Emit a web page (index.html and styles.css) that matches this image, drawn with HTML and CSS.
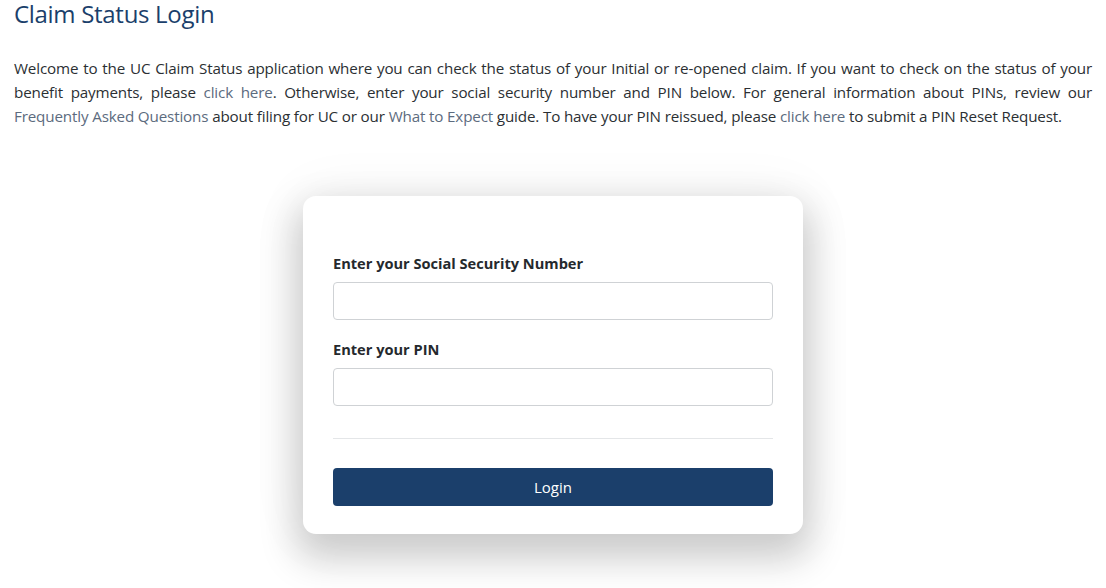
FILE: index.html
```html
<!DOCTYPE html>
<html lang="en">
<head>
<meta charset="utf-8">
<title>Claim Status Login</title>
<link rel="stylesheet" href="styles.css">
</head>
<body>
<main class="page">
  <h1 class="title">Claim Status Login</h1>
  <p class="intro">Welcome to the UC Claim Status application where you can check the status of your Initial or re-opened claim. If you want to check on the status of your benefit payments, please <a href="#">click here</a>. Otherwise, enter your social security number and PIN below. For general information about PINs, review our <a href="#">Frequently Asked Questions</a> about filing for UC or our <a href="#">What to Expect</a> guide. To have your PIN reissued, please <a href="#">click here</a> to submit a PIN Reset Request.</p>
  <div class="card-wrap">
    <form class="card">
      <label class="label" for="ssn">Enter your Social Security Number</label>
      <input class="field" id="ssn" type="text">
      <label class="label" for="pin">Enter your PIN</label>
      <input class="field" id="pin" type="password">
      <hr class="divider">
      <button class="btn" type="button">Login</button>
    </form>
  </div>
</main>
</body>
</html>
```
FILE: styles.css
```css
html, body {
  margin: 0;
  padding: 0;
  background: #fff;
}
body {
  font-family: "Open Sans", "Noto Sans", sans-serif;
  color: #2b2f33;
}
.page {
  padding: 1px 14px 80px;
}
.title {
  margin: 0;
  font-size: 24px;
  line-height: 26px;
  font-weight: 400;
  color: #1b3f6b;
  letter-spacing: -0.3px;
}
.intro {
  margin: 30px 0 0;
  font-size: 15.2px;
  line-height: 23.8px;
  text-align: justify;
  letter-spacing: -0.15px;
}
.intro a {
  color: #5c6b7e;
  text-decoration: none;
}
.card-wrap {
  display: flex;
  justify-content: center;
  padding-top: 68px;
}
.card {
  width: 440px;
  padding: 58px 30px 28px;
  background: #fff;
  border-radius: 13px;
  box-shadow: 0 18px 36px 8px rgba(0,0,0,0.18), 0 0 60px rgba(0,0,0,0.06);
  display: flex;
  flex-direction: column;
}
.label {
  font-size: 14.6px;
  font-weight: 700;
  line-height: 18px;
  color: #25292d;
  margin-bottom: 10px;
}
.field {
  height: 38px;
  box-sizing: border-box;
  border: 1px solid #cfd2d5;
  border-radius: 4px;
  margin: 0 0 20px;
  font: inherit;
}
.divider {
  border: 0;
  border-top: 1px solid #e4e6e8;
  margin: 12px 0 29px;
  width: 100%;
}
.btn {
  height: 38px;
  background: #1b3f6b;
  color: #fff;
  border: 0;
  border-radius: 4px;
  font-family: inherit;
  font-size: 15px;
}
```
